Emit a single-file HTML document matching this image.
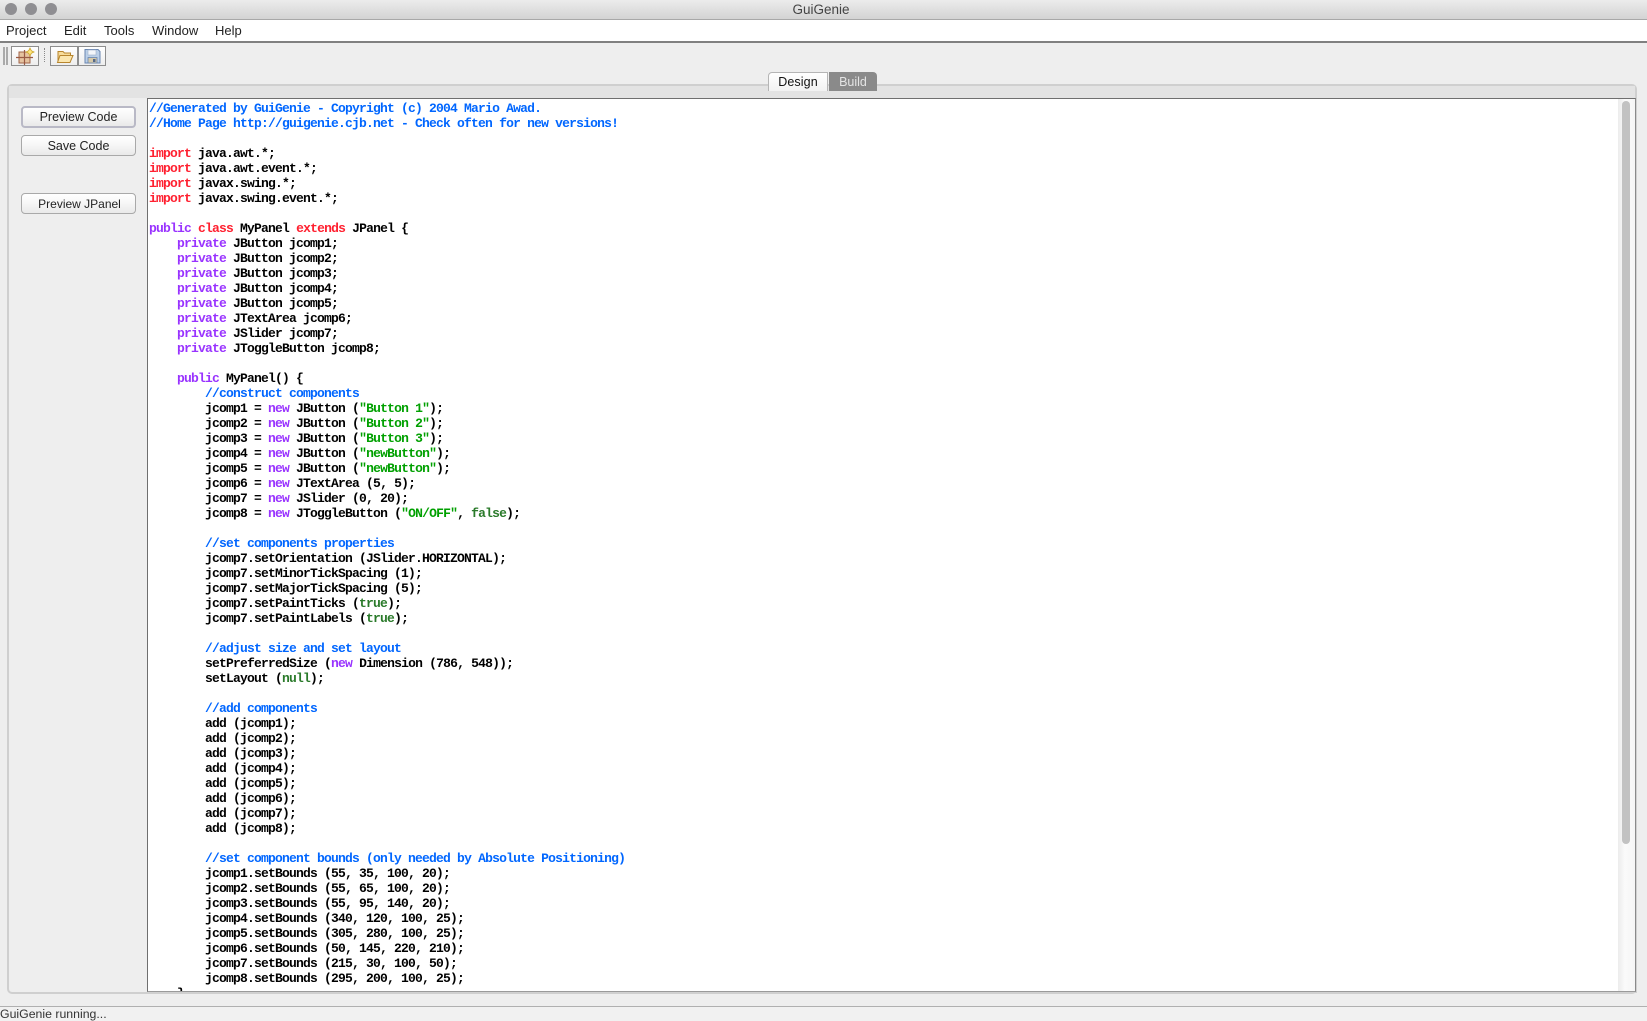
<!DOCTYPE html>
<html><head><meta charset="utf-8"><style>
html,body{margin:0;padding:0}
body{width:1647px;height:1021px;position:relative;overflow:hidden;background:#eeeeee;font-family:"Liberation Sans",sans-serif;color:#111}
div{position:absolute;box-sizing:border-box}
.dot{width:12px;height:12px;border-radius:50%;background:#8f8e92;top:3px}
.m{top:22px;font-size:13px;line-height:18px;letter-spacing:0;color:#222}
.btn{left:21px;width:115px;height:21px;border:1px solid #a9a9a9;border-radius:4px;background:linear-gradient(#ffffff,#f6f6f6 50%,#e9e9e9);text-align:center;font-size:12.500px;line-height:20px;letter-spacing:0;color:#222}
.tb{top:46px;height:20px;width:28px;border:1px solid #8e8e8e;background:linear-gradient(#fff,#eeeeee)}
pre{position:absolute;margin:0;left:149px;top:100px;font:bold 13px/15px "Liberation Mono",monospace;letter-spacing:-.8px;color:#000}
i{font-style:normal}
.c{color:#0066ff}.r{color:#ff2030}.p{color:#9933ff}.s{color:#00a000}.k{color:#2a7a2a}
</style></head><body>
<div style="left:0;top:0;width:1647px;height:20px;background:linear-gradient(#ececec,#d3d3d3);border-bottom:1px solid #a8a8a8"></div>
<div class="dot" style="left:5px"></div><div class="dot" style="left:25px"></div><div class="dot" style="left:45px"></div>
<div style="left:0;top:1px;width:1642px;text-align:center;font-size:13.500px;line-height:17px;color:#444">GuiGenie</div>
<div style="left:0;top:20px;width:1647px;height:23px;background:#fff;border-bottom:2px solid #808080"></div>
<div class="m" style="left:6px">Project</div><div class="m" style="left:64px">Edit</div><div class="m" style="left:104px">Tools</div><div class="m" style="left:152px">Window</div><div class="m" style="left:215px">Help</div>

<div style="left:3px;top:47px;width:2px;height:18px;background:#aaa"></div><div style="left:6px;top:47px;width:2px;height:18px;background:#aaa"></div>
<div style="left:44px;top:48px;width:0;height:14px;border-left:1px dotted #888"></div>
<div class="tb" style="left:11px"><svg width="26" height="18" viewBox="0 0 26 18"><rect x="7" y="5" width="11" height="11" fill="#e6c3a0" stroke="#a0654a"/><path d="M12.500 3v15M4 10.500h17" stroke="#9a5a44" stroke-width="1.200"/><path d="M18 1l1.300 2.700 2.700 1.300-2.700 1.300-1.300 2.700-1.300-2.700-2.700-1.300 2.700-1.300z" fill="#ffe680" stroke="#c9a227" stroke-width=".8"/></svg></div>
<div class="tb" style="left:50px"><svg width="26" height="18" viewBox="0 0 26 18"><path d="M7 15V4.500h5l1.500 1.500h6v2.500" fill="#f7dc9a" stroke="#b8862e"/><path d="M6.500 15.500l2.500-7h13l-3 7z" fill="#fbe6ae" stroke="#b8862e"/></svg></div>
<div class="tb" style="left:78px;width:28px"><svg width="26" height="18" viewBox="0 0 26 18"><path d="M6 2.500h13l2 2v11.500H6z" fill="#bcd0e8" stroke="#6a86b0"/><rect x="9" y="3" width="8" height="5" fill="#f3f6fa" stroke="#9db0c8" stroke-width=".6"/><rect x="9" y="10.500" width="9" height="5.500" fill="#d6c9a8" stroke="#6a86b0" stroke-width=".8"/><rect x="14" y="12" width="2.500" height="3" fill="#55698a"/></svg></div>

<div style="left:7px;top:84px;width:1630px;height:910px;border:2px solid #cfcfcf;border-radius:5px;background:#eeeeee"></div>
<div style="left:9px;top:86px;width:1626px;height:12px;background:#e3e3e3"></div>
<div style="left:768px;top:72px;width:60px;height:19px;border:1px solid #b5b5b5;border-bottom:0;border-radius:4px 0 0 0;background:linear-gradient(#fff,#f2f2f2);text-align:center;font-size:12.500px;line-height:19px;letter-spacing:.1px;color:#111">Design</div>
<div style="left:829px;top:72px;width:48px;height:19px;border-radius:0 4px 0 0;background:#8a8a8a;text-align:center;font-size:12.500px;line-height:20px;letter-spacing:0;color:#e4e4e4">Build</div>

<div class="btn" style="top:106px;height:22px;border:2px solid #b9b9c6;line-height:19px">Preview Code</div>
<div class="btn" style="top:135px">Save Code</div>
<div class="btn" style="top:193px;font-size:12px;padding-left:2px">Preview JPanel</div>

<div style="left:147px;top:98px;width:1489px;height:894px;border:1px solid #6f6f6f;border-right-color:#8a8a8a;border-bottom-color:#9a9a9a;background:#fff;box-shadow:1px 1px 0 #d0d0d0"></div>
<div style="left:1618px;top:99px;width:17px;height:892px;background:linear-gradient(90deg,#ececec,#fafafa 40%,#f6f6f6)"></div>
<div style="left:1622px;top:101px;width:8px;height:743px;border-radius:4px;background:#c2c2c2"></div>

<div style="left:148px;top:99px;width:1470px;height:892px;overflow:hidden">
<pre style="left:1px;top:2px"><i class="c">//Generated by GuiGenie - Copyright (c) 2004 Mario Awad.</i>
<i class="c">//Home Page http://guigenie.cjb.net - Check often for new versions!</i>

<i class="r">import</i> java.awt.*;
<i class="r">import</i> java.awt.event.*;
<i class="r">import</i> javax.swing.*;
<i class="r">import</i> javax.swing.event.*;

<i class="p">public</i> <i class="r">class</i> MyPanel <i class="r">extends</i> JPanel {
    <i class="p">private</i> JButton jcomp1;
    <i class="p">private</i> JButton jcomp2;
    <i class="p">private</i> JButton jcomp3;
    <i class="p">private</i> JButton jcomp4;
    <i class="p">private</i> JButton jcomp5;
    <i class="p">private</i> JTextArea jcomp6;
    <i class="p">private</i> JSlider jcomp7;
    <i class="p">private</i> JToggleButton jcomp8;

    <i class="p">public</i> MyPanel() {
        <i class="c">//construct components</i>
        jcomp1 = <i class="p">new</i> JButton (<i class="s">"Button 1"</i>);
        jcomp2 = <i class="p">new</i> JButton (<i class="s">"Button 2"</i>);
        jcomp3 = <i class="p">new</i> JButton (<i class="s">"Button 3"</i>);
        jcomp4 = <i class="p">new</i> JButton (<i class="s">"newButton"</i>);
        jcomp5 = <i class="p">new</i> JButton (<i class="s">"newButton"</i>);
        jcomp6 = <i class="p">new</i> JTextArea (5, 5);
        jcomp7 = <i class="p">new</i> JSlider (0, 20);
        jcomp8 = <i class="p">new</i> JToggleButton (<i class="s">"ON/OFF"</i>, <i class="k">false</i>);

        <i class="c">//set components properties</i>
        jcomp7.setOrientation (JSlider.HORIZONTAL);
        jcomp7.setMinorTickSpacing (1);
        jcomp7.setMajorTickSpacing (5);
        jcomp7.setPaintTicks (<i class="k">true</i>);
        jcomp7.setPaintLabels (<i class="k">true</i>);

        <i class="c">//adjust size and set layout</i>
        setPreferredSize (<i class="p">new</i> Dimension (786, 548));
        setLayout (<i class="k">null</i>);

        <i class="c">//add components</i>
        add (jcomp1);
        add (jcomp2);
        add (jcomp3);
        add (jcomp4);
        add (jcomp5);
        add (jcomp6);
        add (jcomp7);
        add (jcomp8);

        <i class="c">//set component bounds (only needed by Absolute Positioning)</i>
        jcomp1.setBounds (55, 35, 100, 20);
        jcomp2.setBounds (55, 65, 100, 20);
        jcomp3.setBounds (55, 95, 140, 20);
        jcomp4.setBounds (340, 120, 100, 25);
        jcomp5.setBounds (305, 280, 100, 25);
        jcomp6.setBounds (50, 145, 220, 210);
        jcomp7.setBounds (215, 30, 100, 50);
        jcomp8.setBounds (295, 200, 100, 25);
    }</pre>
</div>

<div style="left:0;top:1006px;width:1647px;height:15px;background:#f1f1f1;border-top:1px solid #b0b0b0"></div>
<div style="left:0;top:1007px;font-size:12.300px;line-height:14px;color:#333">GuiGenie running...</div>
</body></html>
